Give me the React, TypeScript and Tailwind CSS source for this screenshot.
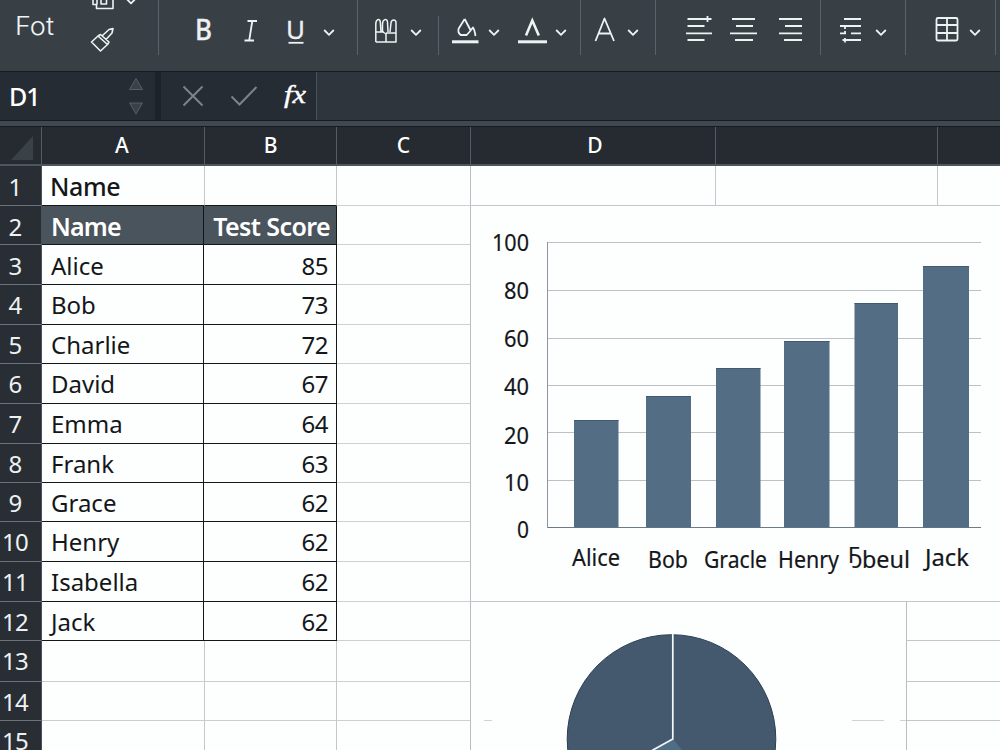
import type { ReactNode } from 'react'

const ROWS = [
  { n: 1, h: 'h-[40px]', name: 'Name', score: '' },
  { n: 2, h: 'h-[39px]', name: 'Name', score: 'Test Score' },
  { n: 3, h: 'h-[40px]', name: 'Alice', score: '85' },
  { n: 4, h: 'h-[40px]', name: 'Bob', score: '73' },
  { n: 5, h: 'h-[39px]', name: 'Charlie', score: '72' },
  { n: 6, h: 'h-[40px]', name: 'David', score: '67' },
  { n: 7, h: 'h-[40px]', name: 'Emma', score: '64' },
  { n: 8, h: 'h-[39px]', name: 'Frank', score: '63' },
  { n: 9, h: 'h-[39px]', name: 'Grace', score: '62' },
  { n: 10, h: 'h-[40px]', name: 'Henry', score: '62' },
  { n: 11, h: 'h-[40px]', name: 'Isabella', score: '62' },
  { n: 12, h: 'h-[39px]', name: 'Jack', score: '62' },
  { n: 13, h: 'h-[41px]', name: '', score: '' },
  { n: 14, h: 'h-[39px]', name: '', score: '' },
  { n: 15, h: 'h-[40px]', name: '', score: '' },
]

const TICKS = [
  { label: '100', y: 242.5, base: 250.5, w: 37 },
  { label: '80', y: 290.5, base: 299, w: 25 },
  { label: '60', y: 338.5, base: 347, w: 25 },
  { label: '40', y: 385.5, base: 394.5, w: 25 },
  { label: '20', y: 432.5, base: 443.5, w: 25 },
  { label: '10', y: 480.5, base: 490.5, w: 25 },
  { label: '0', y: 527.5, base: 537.5, w: 12 },
]

const BARS = [
  { label: 'Alice', x: 574, w: 44.5, top: 420, tx: 572, tw: 48, base: 565.5 },
  { label: 'Bob', x: 646, w: 45, top: 396, tx: 648, tw: 40, base: 568 },
  { label: 'Gracle', x: 716, w: 44.5, top: 368, tx: 704, tw: 63, base: 568 },
  { label: 'Henry', x: 784, w: 45.5, top: 341, tx: 778, tw: 61, base: 568 },
  { label: 'Ҕbeul', x: 854.5, w: 43.5, top: 303, tx: 848, tw: 62, base: 567.5 },
  { label: 'Jack', x: 923, w: 46, top: 266, tx: 925, tw: 44, base: 566 },
]

function Icon({ className, w, children }: { className: string; w: number; children: ReactNode }) {
  return (
    <svg
      width={w}
      height={28}
      viewBox={`0 0 ${w} 28`}
      className={`mt-4 shrink-0 overflow-visible ${className}`}
      fill="none"
      stroke="#eef2f3"
      strokeWidth={1.8}
      strokeLinejoin="round"
    >
      {children}
    </svg>
  )
}

function Chevron({ className }: { className: string }) {
  return (
    <Icon w={12} className={className}>
      <path d="M1.200 14l4.800 4.800L10.800 14" />
    </Icon>
  )
}

function Divider({ className }: { className: string }) {
  return <div className={`w-px shrink-0 bg-[#596269] ${className}`} />
}

function Toolbar() {
  return (
    <div className="flex h-[71px] shrink-0 items-start overflow-hidden bg-[#384046]">
      <Icon w={60} className="ml-4">
        <text x="-1" y="19" fontSize="25" fontWeight="300" textLength="39" lengthAdjust="spacingAndGlyphs" fill="#f1f4f5" stroke="none" className="font-['Inter',sans-serif]">Fot</text>
      </Icon>
      <svg width="48" height="56" viewBox="90 0 48 56" fill="none" stroke="#eef2f3" strokeWidth="1.6" strokeLinejoin="round" className="ml-3.5 shrink-0">
        <path d="M93 -1v5.500h3.500v4H113V0M101 -1v5h5.500v-5M97 4.500V0" />
        <path d="M126.200 -1.500l4.800 4.800 4.800-4.800" strokeWidth="1.8" />
        <path d="M91.500 42l6.500-6 9.500 8.500-7 6.500zM98 36l2.500-1.500 8.500 7.500-1.500 2.500M102.500 35.500l6.500-6 4-1-1 4.500-6 6.500" />
      </svg>
      <Divider className="ml-5 h-[55px]" />
      <Icon w={20} className="ml-[34px]">
        <text x="2" y="24" fontSize="28" fontWeight="500" textLength="17" lengthAdjust="spacingAndGlyphs" fill="#eef1f2" stroke="#eef1f2" strokeWidth="0.300" className="font-['Noto_Sans',sans-serif]">B</text>
      </Icon>
      <Icon w={20} className="ml-7">
        <path d="M6.500 5h9.500M3.500 24.500h9.500M11.300 5L8.200 24.500" />
      </Icon>
      <Icon w={20} className="ml-[25px]">
        <text x="0" y="22.500" fontSize="26" textLength="19" lengthAdjust="spacingAndGlyphs" fill="#eef1f2" stroke="#eef1f2" strokeWidth="0.300" className="font-['Noto_Sans',sans-serif]">U</text>
        <path d="M2.500 26.800h15" />
      </Icon>
      <Chevron className="ml-[17px]" />
      <Divider className="ml-[22px] h-[55px]" />
      <Icon w={24} className="ml-4">
        <path d="M1.800 26V8c0-5 4-6 4.500-2l.7 10M8.500 16V8c0-5 4.500-6 5-2l.5 10M16 16l1-9c.500-4 5-4 5 0v19H1.800M1.800 16H9v-1M9 16l3 2v8M12 17h10" strokeWidth="1.5" />
      </Icon>
      <Chevron className="ml-3" />
      <Divider className="mt-4 ml-4 h-[39px]" />
      <Icon w={28} className="ml-3">
        <path d="M13.700 3l-6 9.500c-1 3 0 5 2 6.500h6l4-4.500-6-11.500M19.500 14.500L22 11.500c1.500 2 2 5 2.500 8.500" />
        <path d="M1 25.800h26.500" strokeWidth="3" />
      </Icon>
      <Chevron className="ml-[9px]" />
      <Icon w={32} className="ml-[17px]">
        <path d="M9 19.500L15.300 4.500 21.800 19.500" strokeWidth="2.600" strokeLinejoin="miter" />
        <path d="M1 25.800h29" strokeWidth="3" />
      </Icon>
      <Chevron className="ml-1.5" />
      <Divider className="ml-[13px] h-[55px]" />
      <Icon w={23} className="ml-3">
        <path d="M2.500 25l9-22.500 9.500 22.500M5.500 17.500h12" />
      </Icon>
      <Chevron className="ml-[11px]" />
      <Divider className="ml-4 h-[55px]" />
      <Icon w={28} className="ml-[29px]">
        <path d="M2.500 3h24M22.500 0v6M2.500 10h17M1 17.300h26M2.500 24h17" />
      </Icon>
      <Icon w={30} className="ml-4">
        <path d="M3 3h23M7 10h17M1 17.300h27M6 24h18" />
      </Icon>
      <Icon w={26} className="ml-[18px]">
        <path d="M2 3h23M8 10h17M2 17.300h23M7 24h18" />
      </Icon>
      <Divider className="ml-[17px] h-[55px]" />
      <Icon w={24} className="ml-[18px]">
        <path d="M5 3h17M1 10h21M1 17.300h6M12 17.300h10M3.500 24h18.500M6 10v3M6 15v3M6 22v4.500" />
      </Icon>
      <Chevron className="ml-3" />
      <Divider className="ml-[18px] h-[55px]" />
      <Icon w={26} className="ml-7">
        <rect x="2.500" y="2" width="21" height="22.500" rx="1.500" />
        <path d="M2.500 9h21M2.500 17h21M13 2v22.500" />
      </Icon>
      <Chevron className="ml-[9px]" />
      <Divider className="ml-3.5 h-[55px]" />
    </div>
  )
}

function FormulaBar() {
  return (
    <div className="flex h-[50px] shrink-0 border-y border-[#171c22] bg-[#262c33]">
      <div className="flex w-[155px] items-center justify-between pr-[11px] pl-[9px]">
        <span className="text-[25px] leading-none font-medium tracking-[-1px] text-white">D1</span>
        <svg width="16" height="38" viewBox="0 0 16 38" fill="#3a4147" stroke="#565e65">
          <path d="M1.500 12.500L8 1.500l6.500 11zM1.500 26h13L8 37z" />
        </svg>
      </div>
      <div className="w-1.5 bg-[#1d2229]" />
      <div className="flex w-[156px] items-center border-r border-[#4a525b] pl-[21px]">
        <svg width="22" height="22" viewBox="0 0 22 22" stroke="#7c838a" strokeWidth="2">
          <path d="M1.500 1.500l19 19M20.500 1.500l-19 19" />
        </svg>
        <svg width="28" height="22" viewBox="0 0 28 22" fill="none" stroke="#7c838a" strokeWidth="2" className="ml-[26px]">
          <path d="M1.500 11.500l8 8L26.500 2" />
        </svg>
        <svg width="30" height="30" viewBox="0 0 30 30" className="ml-6 overflow-visible">
          <text x="2" y="22" fontSize="26" textLength="22" lengthAdjust="spacingAndGlyphs" fill="#fff" stroke="#fff" strokeWidth="0.400" className="font-['Liberation_Serif',serif] italic">fx</text>
        </svg>
      </div>
      <div className="flex-1 bg-[#2f353d]" />
    </div>
  )
}

function ColumnHeader() {
  const cell = 'border-r border-[#555d64] flex items-center justify-center'
  return (
    <div className="flex h-[39px] shrink-0 border-b-2 border-[#4e565d] bg-[#262b31] text-[21px] leading-none font-medium text-white">
      <div className="flex w-[42px] shrink-0 items-end justify-end border-r border-[#555d64] pr-2 pb-1">
        <svg width="22" height="24" viewBox="0 0 22 24">
          <path d="M22 0v24H0z" fill="#3a4248" />
        </svg>
      </div>
      <div className={`w-[163px] shrink-0 pr-0.5 ${cell}`}>A</div>
      <div className={`w-[132px] shrink-0 ${cell}`}>B</div>
      <div className={`w-[134px] shrink-0 ${cell}`}>C</div>
      <div className={`w-[245px] shrink-0 pl-1 ${cell}`}>D</div>
      <div className={`w-[222px] shrink-0 ${cell}`} />
    </div>
  )
}

function SheetRow({ n, h, name, score }: (typeof ROWS)[number]) {
  const inTable = n >= 2 && n <= 12
  const head = n === 2
  const bottom = n <= 12 ? 'border-b-[#14171a]' : 'border-b-[#c9cdd0]'
  const right = inTable ? 'border-r-[#14171a]' : 'border-r-[#c3c7cb]'
  const tone = head ? 'bg-[#4a545c] font-semibold text-white' : 'text-[#14171a]'
  const size = head || n === 1 ? 'text-[25px]' : 'text-[24px]'
  const line = n < 4 ? 'leading-[41px]' : 'leading-[39px]'

  return (
    <div className={`flex shrink-0 ${line} ${h} ${size}`}>
      <div className="flex w-[42px] justify-center border-r border-b border-r-[#4a5258] border-b-[#69727a] bg-[#282e34] pr-[11px] text-[24px] tracking-[-0.8px] text-[#eef1f2]">
        {n}
      </div>
      <div className={`border-r border-b pl-2 ${bottom} ${right} ${tone} ${n === 1 ? 'w-[163px] font-medium tracking-[-0.4px]' : inTable ? 'w-[162px] pl-[9px]' : 'w-[163px]'}`}>
        {name && <span className={head ? 'tracking-[-0.8px]' : ''}>{name}</span>}
      </div>
      <div className={`border-r border-b text-right ${inTable ? 'w-[133px]' : 'w-[132px]'} ${head ? 'pr-1.5' : 'pr-2'} ${bottom} ${right} ${tone}`}>
        <span className={head ? 'tracking-[-0.6px] whitespace-nowrap' : 'tracking-[-0.5px]'}>{score}</span>
      </div>
      <div className="w-[134px] border-r border-b border-r-[#b9bdc1] border-b-[#cdd0d3]" />
    </div>
  )
}

function BarChart() {
  return (
    <svg width="529" height="395" viewBox="471 206 529 395" className="block font-['Noto_Sans',sans-serif]" fontSize="24" fill="#14171a">
      {TICKS.map(t => (
        <g key={t.label}>
          <path d={`M548 ${t.y}H981`} stroke={t.label === '0' ? '#6d7a88' : '#bcc1c6'} />
          <text x={529 - t.w} y={t.base} textLength={t.w} lengthAdjust="spacingAndGlyphs" stroke="#14171a" strokeWidth="0.200">{t.label}</text>
        </g>
      ))}
      <path d="M547.500 242V528" stroke="#8d959d" />
      {BARS.map(b => (
        <g key={b.label}>
          <rect x={b.x} y={b.top} width={b.w} height={527.5 - b.top} fill="#536d84" />
          <path d={`M${b.x} ${b.top + 0.5}h${b.w}`} stroke="#405a73" />
          <text x={b.tx} y={b.base} textLength={b.tw} lengthAdjust="spacingAndGlyphs" stroke="#14171a" strokeWidth="0.200">
            {/* the hooked initial hangs below the baseline, so it is lifted */}
            {b.label[0] === 'Ҕ' ? <><tspan dy="-5" fontSize="22">Ҕ</tspan><tspan dy="5">{b.label.slice(1)}</tspan></> : b.label}
          </text>
        </g>
      ))}
    </svg>
  )
}

function PieChart() {
  return (
    <svg width="435" height="148" viewBox="471 602 435 148" className="block">
      <circle cx="671.500" cy="739" r="104.300" fill="#44596e" stroke="#2b3f54" />
      <path d="M673 739L653 750H682z" fill="#506d86" />
      <path d="M672.800 634V739L652 750.500" fill="none" stroke="#f4f7f8" strokeWidth="1.700" />
      <path d="M484 720.500h8M852 720.500h32M900 720.500h6" stroke="#d0d3d5" />
    </svg>
  )
}

export default function App() {
  return (
    <div className="flex h-[750px] w-[1000px] flex-col overflow-hidden bg-[#fdfefe] font-['Noto_Sans',sans-serif]">
      <Toolbar />
      <FormulaBar />
      <div className="h-1.5 shrink-0 border-b border-[#171c22] bg-[#404850]" />
      <ColumnHeader />
      <div className="flex flex-1 overflow-hidden">
        <div className="flex w-[471px] shrink-0 flex-col">
          {ROWS.map(row => <SheetRow key={row.n} {...row} />)}
        </div>
        <div className="flex flex-1 flex-col">
          <div className="flex h-[40px] shrink-0 border-b border-[#c3c7cb]">
            <div className="w-[245px] border-r border-[#c3c7cb]" />
            <div className="w-[222px] border-r border-[#c3c7cb]" />
          </div>
          <div className="h-[396px] shrink-0 border-b border-[#c3c7cb]">
            <BarChart />
          </div>
          <div className="flex">
            <PieChart />
            <div className="flex-1 border-l border-[#b9bdc1]">
              <div className="h-[39px] border-b border-[#c3c7cb]" />
              <div className="h-[41px] border-b border-[#c3c7cb]" />
              <div className="h-[39px] border-b border-[#c3c7cb]" />
            </div>
          </div>
        </div>
      </div>
    </div>
  )
}
